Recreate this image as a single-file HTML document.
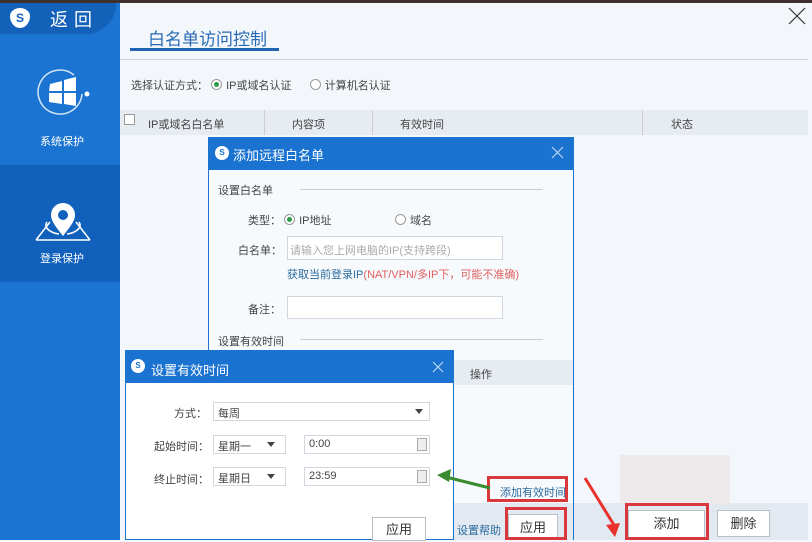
<!DOCTYPE html>
<html><head><meta charset="utf-8"><style>
*{margin:0;padding:0;box-sizing:border-box}
body{width:812px;height:540px;overflow:hidden;position:relative;background:#f3f7fb;font-family:"Liberation Sans","Noto Sans CJK SC",sans-serif;font-size:12px;color:#444}
.a{position:absolute}
.inp{position:absolute;background:#fff;border:1px solid #cfd6de}
.btn{position:absolute;background:#fff;border:1px solid #b8c0c8;text-align:center;font-size:13px;color:#333}
.red{position:absolute;border:3px solid #d9383c}
.radio{display:inline-block;width:11px;height:11px;border:1px solid #999;border-radius:50%;vertical-align:-1px;margin-right:4px;position:relative;background:#fff}
.radio.on::after{content:"";position:absolute;left:2px;top:2px;width:5px;height:5px;border-radius:50%;background:#2a9d4a}
.dd{position:absolute;right:6px;top:6px;border-left:4px solid transparent;border-right:4px solid transparent;border-top:5px solid #444}
.spin{position:absolute;right:2px;top:2px;width:10px;height:13px;border:1px solid #aaa;background:#eee}
</style></head><body>
<div class="a" style="left:0;top:0;width:812px;height:3px;background:#3f3030"></div>
<!-- sidebar -->
<div class="a" style="left:0;top:3px;width:120px;height:537px;background:#1b74d2"></div>
<div class="a" style="left:0;top:3px;width:116px;height:31px;background:#1461b9;border-radius:0 0 30px 0"></div>
<div class="a" style="left:10px;top:8px;width:20px;height:20px;border-radius:50% 50% 50% 50%/40% 40% 60% 60%;background:#fff;color:#1461b9;font-weight:bold;font-size:12px;text-align:center;line-height:20px">S</div>
<div class="a" style="left:50px;top:6px;color:#fff;font-size:18px;letter-spacing:6px">返回</div>
<svg class="a" style="left:34px;top:68px" width="58" height="52"><path d="M48 26a22 22 0 1 1-8-19" fill="none" stroke="#fff" stroke-width="1.5" opacity=".8"/><circle cx="53" cy="26" r="2.5" fill="#fff"/><path d="M16 16l12-3v10h-13zM30 12l12-3v14h-12zM15 25h13v11l-13-2zM30 25h12v13l-12-2z" fill="#fff"/></svg>
<div class="a" style="left:40px;top:133px;color:#fff;font-size:11px">系统保护</div>
<div class="a" style="left:0;top:165px;width:120px;height:117px;background:#1161bc"></div>
<svg class="a" style="left:34px;top:198px" width="58" height="44"><path d="M2 42l14-18M56 42l-14-18M2 42h54" stroke="#fff" stroke-width="1.5" fill="none"/><path d="M29 38c-7-9-12-15-12-21a12 12 0 0 1 24 0c0 6-5 12-12 21z" fill="#fff"/><circle cx="29" cy="17" r="5" fill="#1161bc"/><path d="M13 24c-4 6 4 11 12 12M45 24c4 6-4 11-12 12" stroke="#fff" stroke-width="1.5" fill="none"/></svg>
<div class="a" style="left:40px;top:250px;color:#fff;font-size:11px">登录保护</div>
<!-- main -->
<div class="a" style="left:148px;top:25px;color:#2a6ab5;font-size:17px">白名单访问控制</div>
<div class="a" style="left:130px;top:48px;width:149px;height:3px;background:#1d64b3"></div>
<div class="a" style="left:120px;top:59px;width:688px;height:1px;background:#cdd3da"></div>
<svg class="a" style="left:788px;top:7px" width="18" height="18"><path d="M1 1l16 16M17 1L1 17" stroke="#333" stroke-width="1.2"/></svg>
<div class="a" style="left:131px;top:77px;font-size:11px">选择认证方式：&nbsp;<span class="radio on"></span>IP或域名认证 &nbsp;&nbsp;&nbsp;&nbsp;&nbsp;<span class="radio"></span>计算机名认证</div>
<div class="a" style="left:120px;top:110px;width:688px;height:25px;background:#e6ecf2"></div>
<div class="a" style="left:124px;top:114px;width:11px;height:11px;border:1px solid #999;background:#fff"></div>
<div class="a" style="left:148px;top:116px;font-size:11px">IP或域名白名单</div>
<div class="a" style="left:264px;top:110px;width:1px;height:25px;background:#ccd"></div>
<div class="a" style="left:292px;top:116px;font-size:11px">内容项</div>
<div class="a" style="left:372px;top:110px;width:1px;height:25px;background:#ccd"></div>
<div class="a" style="left:400px;top:116px;font-size:11px">有效时间</div>
<div class="a" style="left:642px;top:110px;width:1px;height:25px;background:#ccd"></div>
<div class="a" style="left:671px;top:116px;font-size:11px">状态</div>
<div class="a" style="left:573px;top:503px;width:235px;height:37px;background:#e2e9f0"></div>
<div class="a" style="left:620px;top:455px;width:110px;height:50px;background:#ece6e8;opacity:.8"></div>
<div class="btn" style="left:628px;top:510px;width:77px;height:28px;line-height:26px">添加</div>
<div class="red" style="left:625px;top:503px;width:84px;height:37px"></div>
<div class="btn" style="left:717px;top:510px;width:53px;height:27px;line-height:25px">删除</div>
<svg class="a" style="left:580px;top:470px" width="50" height="70"><path d="M5 8L34 55" stroke="#e8302c" stroke-width="3"/><path d="M26 55l14-2-5 14z" fill="#e8302c"/></svg>
<!-- dialog 1 -->
<div class="a" style="left:208px;top:137px;width:366px;height:403px;background:#f7fafd;border:1px solid #1a73d0"></div>
<div class="a" style="left:208px;top:137px;width:366px;height:33px;background:#1a73d0"></div>
<div class="a" style="left:215px;top:146px;width:14px;height:14px;border-radius:50%;background:#fff;color:#1a73d0;font-size:8px;text-align:center;line-height:14px;font-weight:bold">S</div>
<div class="a" style="left:233px;top:145px;color:#fff;font-size:13px">添加远程白名单</div>
<svg class="a" style="left:551px;top:146px" width="13" height="13"><path d="M1 1l11 11M12 1L1 12" stroke="#cfe0f4" stroke-width="1"/></svg>
<div class="a" style="left:218px;top:182px;font-size:11px">设置白名单</div>
<div class="a" style="left:300px;top:189px;width:243px;height:1px;background:#ccc"></div>
<div class="a" style="left:248px;top:212px;font-size:11px">类型：&nbsp;<span class="radio on"></span>IP地址</div>
<div class="a" style="left:395px;top:212px;font-size:11px"><span class="radio"></span>域名</div>
<div class="a" style="left:238px;top:242px;font-size:11px">白名单：</div>
<div class="inp" style="left:287px;top:236px;width:216px;height:24px;color:#aaa;font-size:11px;padding:5px 2px">请输入您上网电脑的IP(支持跨段)</div>
<div class="a" style="left:287px;top:266px;font-size:11px;color:#2a6a9e">获取当前登录IP<span style="color:#e06060">(NAT/VPN/多IP下，可能不准确)</span></div>
<div class="a" style="left:248px;top:301px;font-size:11px">备注：</div>
<div class="inp" style="left:287px;top:296px;width:216px;height:23px"></div>
<div class="a" style="left:218px;top:333px;font-size:11px">设置有效时间</div>
<div class="a" style="left:300px;top:339px;width:243px;height:1px;background:#ccc"></div>
<div class="a" style="left:453px;top:360px;width:120px;height:25px;background:#e6ecf2"></div>
<div class="a" style="left:470px;top:366px;font-size:11px">操作</div>
<div class="a" style="left:453px;top:503px;width:120px;height:37px;background:#e2e9f0"></div>
<div class="a" style="left:500px;top:484px;font-size:11px;color:#2a6a9e">添加有效时间</div>
<div class="red" style="left:487px;top:476px;width:81px;height:26px"></div>
<div class="a" style="left:457px;top:522px;font-size:11px;color:#2a6a9e">设置帮助</div>
<div class="btn" style="left:508px;top:514px;width:50px;height:26px;line-height:26px">应用</div>
<div class="red" style="left:505px;top:507px;width:62px;height:33px"></div>
<!-- dialog 2 -->
<div class="a" style="left:125px;top:350px;width:329px;height:190px;background:#fff;border:1px solid #1a73d0"></div>
<div class="a" style="left:125px;top:350px;width:329px;height:33px;background:#1a73d0"></div>
<div class="a" style="left:131px;top:359px;width:14px;height:14px;border-radius:50%;background:#fff;color:#1a73d0;font-size:8px;text-align:center;line-height:14px;font-weight:bold">S</div>
<div class="a" style="left:151px;top:360px;color:#fff;font-size:13px">设置有效时间</div>
<svg class="a" style="left:432px;top:361px" width="12" height="12"><path d="M1 1l10 10M11 1L1 11" stroke="#cfe0f4"/></svg>
<div class="a" style="left:174px;top:405px;font-size:11px">方式：</div>
<div class="inp" style="left:213px;top:402px;width:217px;height:19px;font-size:11px;padding:2px 4px">每周<span class="dd"></span></div>
<div class="a" style="left:154px;top:438px;font-size:11px">起始时间：</div>
<div class="inp" style="left:213px;top:435px;width:73px;height:19px;font-size:11px;padding:2px 4px">星期一<span class="dd" style="right:10px"></span></div>
<div class="inp" style="left:304px;top:435px;width:126px;height:19px;font-size:11px;padding:2px 4px">0:00<span class="spin"></span></div>
<div class="a" style="left:154px;top:471px;font-size:11px">终止时间：</div>
<div class="inp" style="left:213px;top:467px;width:73px;height:19px;font-size:11px;padding:2px 4px">星期日<span class="dd" style="right:10px"></span></div>
<div class="inp" style="left:304px;top:467px;width:126px;height:19px;font-size:11px;padding:2px 4px">23:59<span class="spin"></span></div>
<div class="btn" style="left:372px;top:517px;width:54px;height:24px;line-height:24px">应用</div>
<svg class="a" style="left:434px;top:468px" width="60" height="24"><path d="M12 9L56 20" stroke="#3a8a2e" stroke-width="3"/><path d="M3 7l14-6-2 13z" fill="#3a8a2e"/></svg>
</body></html>
